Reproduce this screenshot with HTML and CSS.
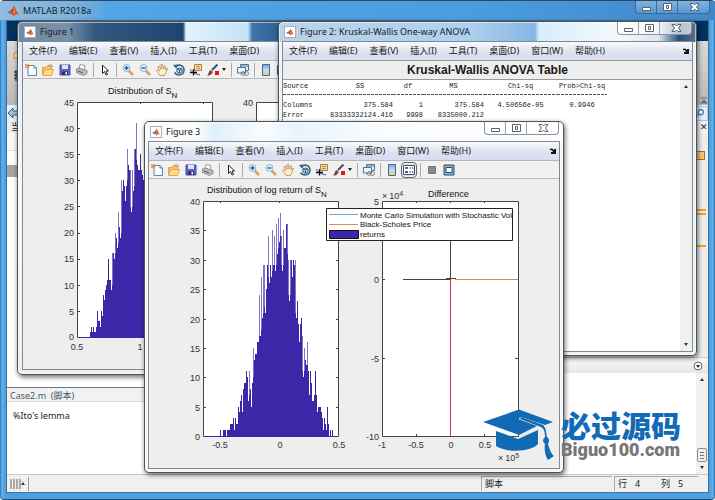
FILE: index.html
```html
<!DOCTYPE html>
<html lang="zh-CN">
<head>
<meta charset="utf-8">
<title>MATLAB R2018a</title>
<link rel="stylesheet" href="styles.css">
</head>
<body>
<svg class="sprites" aria-hidden="true">
  <symbol id="logo" viewBox="0 0 12 12"><path d="M0 7L3.500 5.500L5.500 8L3 9Z" fill="#4a87b8"/><path d="M3.500 5.500L5.500 4L7 1L7.500 4L5.500 8Z" fill="#7c3532"/><path d="M7 1C8.500 3 9.500 7 12 10C9.500 8.500 8 9 6.500 11.500C6 9.500 5 9 3 9C5.500 7.500 6 3 7 1Z" fill="#d9531e"/><path d="M7 2L8 7L6.500 10Z" fill="#f5a04a"/></symbol>
  <symbol id="new" viewBox="0 0 12 12"><path d="M3 1.500H9L11.500 4V11.500H3Z" fill="#f5fbff" stroke="#6387a9"/><path d="M9 1.500V4H11.500" fill="none" stroke="#6387a9"/><path d="M0 0L4 4M4 0L0 4M2 0V4.500M0 2H4.500" stroke="#e08a4c"/></symbol>
  <symbol id="open" viewBox="0 0 12 12"><path d="M.5 11V3.500H4L5 2H9.500V5" fill="#f7c467" stroke="#dfa04a"/><path d="M.5 11.500L2.500 5.500H11.500L9.500 11.500Z" fill="#ffdb86" stroke="#e2a552"/><path d="M6 1.500C9 0 10 1 11 3" fill="none" stroke="#8793a0"/></symbol>
  <symbol id="save" viewBox="0 0 12 12"><path d="M1 1H11V11H1Z" fill="#5f62c4" stroke="#4b4fa4"/><path d="M3 1H9V5H3Z" fill="#dde8fb"/><path d="M3 7.500H9V11H3Z" fill="#30305d"/><path d="M6.500 8H8V10.500H6.500Z" fill="#fff"/></symbol>
  <symbol id="print" viewBox="0 0 12 12"><path d="M3 5L4 .500L9 1.500L8.500 5" fill="#fff" stroke="#999"/><path d="M.500 5L3 4L11 6.500V9.500L7.500 11.500L.500 8.500Z" fill="#b8bbbd" stroke="#8b8e90"/><path d="M2 7L7 9" stroke="#555"/><path d="M8 9.500L10 8.500" stroke="#e0c34d"/></symbol>
  <symbol id="pointer" viewBox="0 0 12 12"><path d="M3.500 1V9.500L5.500 7.500L7 11L8.500 10.500L7 7H9.500Z" fill="#fff" stroke="#222"/></symbol>
  <symbol id="zoomin" viewBox="0 0 12 12"><path d="M6.500 6.500L11 11" stroke="#d9a25c" stroke-width="2.500"/><circle cx="4.500" cy="4" r="3.500" fill="#d9efff" stroke="#8db8dc"/><path d="M2.500 4H6.500M4.500 2V6" stroke="#245a96" stroke-width="1.300"/></symbol>
  <symbol id="zoomout" viewBox="0 0 12 12"><path d="M6.500 6.500L11 11" stroke="#d9a25c" stroke-width="2.500"/><circle cx="4.500" cy="4" r="3.500" fill="#d9efff" stroke="#8db8dc"/><path d="M2.500 4H6.500" stroke="#245a96" stroke-width="1.300"/></symbol>
  <symbol id="hand" viewBox="0 0 12 12"><path d="M4 11.500L.500 6.500L1.500 5.500L3.500 7L2 2.500L3.500 2L5 5.500L5 .500H6.500L7 5L8.500 1.500L9.500 2L9 6L11 4L11.500 5L9.500 9L8.500 11.500Z" fill="#fff0cf" stroke="#c39d71"/></symbol>
  <symbol id="rotate" viewBox="0 0 12 12"><path d="M3 2.500C6-.500 11.500 2 11 6.500C10.500 11.500 4 12.500 1.500 8.500" fill="none" stroke="#355d7f" stroke-width="1.500"/><path d="M0 1L4.500.500L3.500 5Z" fill="#355d7f"/><path d="M4 5L6.500 4L9 5V8L6.500 9.500L4 8Z" fill="#c9dcea" stroke="#355d7f"/><path d="M4 5L6.500 6L9 5M6.500 6V9" fill="none" stroke="#355d7f"/></symbol>
  <symbol id="cursor" viewBox="0 0 12 12"><path d="M4.500.500H11.500V6.500H4.500Z" fill="#f6dc9b" stroke="#a98349"/><path d="M6 2.500H10M6 4.500H10" stroke="#b89358"/><path d="M0 5C2 9 6 10 10 11" fill="none" stroke="#3d4bb0"/><path d="M3.500 5V11.500M0 8.500H7" stroke="#111" stroke-width="1.300"/></symbol>
  <symbol id="brush" viewBox="0 0 12 12"><path d="M5 6L10.500.500" stroke="#3b4d79" stroke-width="2"/><path d="M0 11.500C2 10.500 1 8 3.500 6L6 8C4 11 3 11.500 0 11.500Z" fill="#863f3d"/><path d="M8 7H12V11H8Z" fill="#f50f0f"/></symbol>
  <symbol id="link" viewBox="0 0 12 12"><path d="M3.500.500H11.500V6.500H3.500Z" fill="#eaf4fb" stroke="#49769c"/><path d="M3 2H12" stroke="#49769c"/><path d="M.500 3.500H8.500V9H.500Z" fill="#eff6fb" stroke="#49769c"/><path d="M4 9.500C4 7 8 7 8 9.500S4 12 4 9.500M7 9.500C7 7 11.500 7 11.500 9.500S7 12 7 9.500" fill="none" stroke="#6a747c"/></symbol>
  <linearGradient id="spectrum" x2="0" y2="1"><stop stop-color="#7a9be2"/><stop offset=".5" stop-color="#c2dcef"/><stop offset="1" stop-color="#ffc27a"/></linearGradient>
  <symbol id="colorbar" viewBox="0 0 12 12"><path d="M2.500.500H9.500V11.500H2.500Z" fill="url(#spectrum)" stroke="#456a91"/></symbol>
  <symbol id="legend" viewBox="0 0 12 12"><path d="M.500 1.500H11.500V10.500H.500Z" fill="#fff" stroke="#39527d"/><path d="M2 3H5V5H2Z" fill="#c54444"/><path d="M2 7H5V9H2Z" fill="#4453bb"/><path d="M6.500 4H8M9 4H10.500M6.500 8H8M9 8H10.500" stroke="#333"/></symbol>
  <symbol id="hide" viewBox="0 0 12 12"><path d="M2.500 2.500H9.500V9.500H2.500Z" fill="#8c8c8c" stroke="#767676"/></symbol>
  <symbol id="dock" viewBox="0 0 12 12"><path d="M1 1H11V11H1Z" fill="#8fb0c6" stroke="#284e70"/><path d="M3 3.500H9V8.500H3Z" fill="#f7fcff" stroke="#284e70"/></symbol>
  <symbol id="min" viewBox="0 0 12 12"><path d="M2.500 6.500H10.500V9.500H2.500Z" fill="#fff" stroke="#59626d"/></symbol>
  <symbol id="max" viewBox="0 0 12 12"><path d="M2.500 2.500H10.500V9.500H2.500Z" fill="#fff" stroke="#59626d"/><path d="M5.500 4.500H7.500V7.500H5.500Z" fill="#fff" stroke="#59626d"/></symbol>
  <symbol id="close" viewBox="0 0 12 12"><path d="M2 2.500H5L6.500 4L8 2.500H11L8.500 6L11 9.500H8L6.500 8L5 9.500H2L4.500 6Z" fill="#fff" stroke="#59626d"/></symbol>
  <symbol id="undock" viewBox="0 0 6 6"><path d="M0 1C2 0 3 1 4 2.500V1H6V6H1V4H3C2 2 1 2 0 2Z" fill="#111"/></symbol>
</svg>

<main class="app">
  <header class="titlebar app-title">
    <svg class="logo"><use href="#logo"/></svg><h1>MATLAB R2018a</h1>
    <div class="winbtns"><button aria-label="最小化"><svg><use href="#min"/></svg></button><button aria-label="最大化"><svg><use href="#max"/></svg></button><button class="wide" aria-label="关闭"><svg><use href="#close"/></svg></button></div>
  </header>
  <div class="app-body">
    <div class="tabs-strip"></div>
    <div class="ribbon">
      <svg class="ribbon-icon" viewBox="0 0 6 30"><path d="M1 2H6V7H1Z" fill="#ffe1a0" stroke="#d48d2c"/><path d="M1 21H6M3 19V30M1 24H6M1 28L5 25" stroke="#222" fill="none"/></svg>
      <svg class="collapse" viewBox="0 0 8 8"><path d="M1 1H7M1 6L4 3L7 6Z" stroke="#666" fill="#777"/></svg>
    </div>
    <div class="address">
      <svg class="back" viewBox="0 0 12 12"><path d="M1 6L6 1V4H12V8H6V11Z" fill="#9ac2df" stroke="#315f89"/></svg>
      <button class="search" aria-label="搜索"><svg viewBox="0 0 12 12"><path d="M5 7L1 11" stroke="#79a7ce" stroke-width="2"/><circle cx="7" cy="5" r="3" fill="#fff" stroke="#317ac0" stroke-width="1.500"/></svg></button>
    </div>
    <div class="panes">
      <section class="left-pane">
        <div class="pane-tab">当</div>
        <div class="list"><div class="list-head"></div><div class="list-row"></div></div>
        <h2>Case2.m&nbsp; (脚本)</h2>
        <p class="preview">%Ito's lemma</p>
      </section>
      <section class="right-pane">
        <div class="editor-head"><button aria-label="关闭标签">✕</button></div>
        <div class="editor"><div class="marks"><i class="box"></i><i class="m1"></i><i class="m2"></i><i class="m3"></i></div></div>
        <div class="cmd-head"><svg viewBox="0 0 10 10"><circle cx="5" cy="5" r="4" fill="#fff" stroke="#666"/><path d="M3 4H7L5 7Z" fill="#333"/></svg></div>
        <div class="cmd"><div class="scroll"><i class="up"></i><i class="thumb"></i><i class="down"></i></div></div>
      </section>
    </div>
    <footer class="status">
      <div class="grip"><i class="up"></i></div><span class="spacer"></span>
      <span class="cell kind">脚本</span><span class="cell pos"><b>行</b><b>4</b><b>列</b><b>5</b></span>
    </footer>
  </div>
</main>

<section class="figure fig1" aria-label="Figure 1">
  <header class="titlebar"><svg class="logo chip"><use href="#logo"/></svg><h2>Figure 1</h2></header>
  <div class="client">
    <nav class="menu"><button>文件(F)</button><button>编辑(E)</button><button>查看(V)</button><button>插入(I)</button><button>工具(T)</button><button>桌面(D)</button></nav>
    <div class="toolbar"></div>
    <svg class="plot" viewBox="23 79 410 290">
      <path class="axes" d="M77.500 102.500H212.500V337.500H77.500Z"/>
      <path class="axes" d="M256.500 102.500H392.500V337.500H256.500Z"/>
      <g class="bars" id="hist1"></g>
      <path class="base" d="M78 337.500H212"/>
      <path class="ticks" id="ticks1" d="M140.500 102V104M203.500 102V104"/>
      <text class="title" x="108" y="94">Distribution of S<tspan class="sub" dy="4">N</tspan></text>
      <g class="lab end"><text x="74" y="106">45</text><text x="74" y="132">40</text><text x="74" y="158">35</text><text x="74" y="184">30</text><text x="74" y="210">25</text><text x="74" y="236">20</text><text x="74" y="262">15</text><text x="74" y="289">10</text><text x="74" y="315">5</text><text x="74" y="340">0</text><text x="253" y="106">40</text></g>
      <g class="lab mid"><text x="77" y="350">0.5</text><text x="140" y="350">1</text></g>
    </svg>
  </div>
</section>

<section class="figure fig2" aria-label="Figure 2">
  <header class="titlebar"><svg class="logo chip"><use href="#logo"/></svg><h2>Figure 2: Kruskal-Wallis One-way ANOVA</h2>
    <div class="winbtns"><button aria-label="最小化"><svg><use href="#min"/></svg></button><button aria-label="最大化"><svg><use href="#max"/></svg></button><button class="wide" aria-label="关闭"><svg><use href="#close"/></svg></button></div></header>
  <div class="client">
    <nav class="menu"><button>文件(F)</button><button>编辑(E)</button><button>查看(V)</button><button>插入(I)</button><button>工具(T)</button><button>桌面(D)</button><button>窗口(W)</button><button>帮助(H)</button><svg class="undock"><use href="#undock"/></svg></nav>
    <h3>Kruskal-Wallis ANOVA Table</h3>
    <div class="sheet">
      <table>
        <colgroup><col class="c1"><col class="c2"><col class="c3"><col class="c4"><col class="c5"><col class="c6"></colgroup>
        <thead><tr><th>Source</th><th>SS</th><th>df</th><th>MS</th><th>Chi-sq</th><th>Prob&gt;Chi-sq</th></tr></thead>
        <tbody><tr><th>Columns</th><td>375.584</td><td>1</td><td>375.584</td><td>4.50656e-05</td><td>0.9946</td></tr>
        <tr><th>Error</th><td>83333332124.416</td><td>9998</td><td>8335000.212</td><td></td><td></td></tr></tbody>
      </table>
      <div class="scroll"><i class="up"></i><i class="down"></i></div>
    </div>
  </div>
</section>

<section class="figure fig3" aria-label="Figure 3">
  <header class="titlebar"><svg class="logo chip"><use href="#logo"/></svg><h2>Figure 3</h2>
    <div class="winbtns"><button aria-label="最小化"><svg><use href="#min"/></svg></button><button aria-label="最大化"><svg><use href="#max"/></svg></button><button class="wide" aria-label="关闭"><svg><use href="#close"/></svg></button></div></header>
  <div class="client">
    <nav class="menu"><button>文件(F)</button><button>编辑(E)</button><button>查看(V)</button><button>插入(I)</button><button>工具(T)</button><button>桌面(D)</button><button>窗口(W)</button><button>帮助(H)</button><svg class="undock"><use href="#undock"/></svg></nav>
    <div class="toolbar"></div>
    <svg class="plot" viewBox="149 179 410 289">
      <path class="axes" d="M203.500 201.500H338.500V436.500H203.500Z"/>
      <path class="axes" d="M382.500 201.500H518.500V436.500H382.500Z"/>
      <g class="bars" id="hist3"></g>
      <path class="base" d="M204 436.500H333"/>
      <path class="ticks" id="ticks3" d="M220.500 201V203M279.500 201V203"/>
      <path class="ticks" d="M416.500 201V203M450.500 201V203M484.500 201V203M416.500 436V434M484.500 436V434M382 279.500H385M382 358.500H385M518 358.500H515"/>
      <path class="line dark" d="M403 279.500H451M450.500 240V279M446 278.500H456"/>
      <path class="line orange" d="M455 279.500H518"/>
      <path class="line red" d="M450.500 280V436"/>
      <text class="title" x="207" y="193">Distribution of log return of S<tspan class="sub" dy="4">N</tspan></text>
      <text class="title" x="428" y="197">Difference</text>
      <g class="lab end"><text x="200" y="205">40</text><text x="200" y="234">35</text><text x="200" y="264">30</text><text x="200" y="293">25</text><text x="200" y="323">20</text><text x="200" y="352">15</text><text x="200" y="381">10</text><text x="200" y="411">5</text><text x="200" y="440">0</text>
      <text x="379" y="205">5</text><text x="379" y="283">0</text><text x="379" y="362">-5</text><text x="379" y="440">-10</text></g>
      <g class="lab mid"><text x="220" y="448">-0.5</text><text x="280" y="448">0</text><text x="339" y="448">0.5</text><text x="382" y="448">-1</text><text x="416" y="448">-0.5</text><text x="451" y="448">0</text><text x="485" y="448">0.5</text></g>
      <text class="lab" x="382" y="199">×<tspan dx="2">10</tspan><tspan class="sup" dy="-3">4</tspan></text>
      <text class="lab" x="498" y="461">×<tspan dx="2">10</tspan><tspan class="sup" dy="-3">5</tspan></text>
      <path d="M326.500 208.500H512.500V240.500H326.500Z" fill="#fff" stroke="#222"/>
      <path class="line" d="M329 214.500H358" stroke="#63a9da"/><path class="line" d="M329 224.500H358" stroke="#e08a5f"/>
      <path d="M329.500 230.500H358.500V238.500H329.500Z" fill="#3e26a8" stroke="#111"/>
      <g class="key"><text x="360" y="218">Monte Carlo Simulation with Stochastic Vol</text><text x="360" y="227">Black-Scholes Price</text><text x="360" y="237">returns</text></g>
    </svg>
  </div>
</section>

<aside class="watermark">
  <svg viewBox="482 410 74 52" aria-hidden="true"><g fill="#116ab5"><path d="M483 423L519 410.500L553 423L545 426L521 418L518 420L537 427L519 436Z"/><path d="M496 432L518 440L538 431V445C531 453 506 454 496 447Z"/><path d="M521 418L543 426C547 430 546 435 547 438C550 440 549 443 548 445C550 452 552 456 554 457L548 461C545 457 544 449 545 445C542 442 543 440 545 438C545 432 544 430 541 428L520 420Z"/></g></svg>
  <div><strong>必过源码</strong><span>Biguo100.com</span></div>
</aside>
<script src="figures.js"></script>
</body>
</html>
```
FILE: styles.css
```css
* { box-sizing: border-box; }
body { margin: 0; height: 100vh; overflow: hidden; position: relative; font: 9px/12px "Noto Sans", "Noto Sans CJK SC", sans-serif; color: #1a1a1a; }
h1, h2, h3, p { margin: 0; font-weight: 400; }
button { border: 0; background: none; padding: 0; font: inherit; color: inherit; }
svg { display: block; flex: none; }
i { display: block; }
.sprites { position: absolute; width: 0; height: 0; }

.app { height: 100%; display: flex; flex-direction: column; padding: 0 6px 6px; background: linear-gradient(90deg, #2874b5 0, #62b5ee 2px, #4e9fdf 5px, #4e9fdf calc(100% - 5px), #62b5ee calc(100% - 2px), #23669f 100%); border-radius: 4px; border: solid #284a68; border-width: 1px 0; }
.titlebar { display: flex; align-items: center; }
.app-title { height: 19px; gap: 4px; margin: 0 -6px; padding: 0 5px 0 7px; background: linear-gradient(90deg, #93bbdc, #7fb1dd 70px, #55a4e4 110px, #4b9ddf 65%, #4187c8); }
.titlebar h1, .titlebar h2 { font-size: 9px; line-height: 12px; }
.logo { width: 12px; height: 12px; }
.chip { background: #fff; border: 1px solid #a5b0ba; padding: 1px; }
.winbtns { display: flex; align-self: flex-start; margin-left: auto; height: 13px; border: 1px solid #89949e; border-top: 0; border-radius: 0 0 4px 4px; overflow: hidden; }
.winbtns button { width: 21px; display: grid; place-items: center; border-right: 1px solid #9aa5af; }
.winbtns .wide { width: 31px; border: 0; }
.winbtns svg { width: 12px; height: 12px; }
.app-title .winbtns { border-color: #396a99; background: linear-gradient(#82b3dd, #5799d1); }
.app-title .winbtns button { border-color: #396a99; }

.app-body { flex: 1; min-height: 0; display: flex; flex-direction: column; background: #fff; border: 1px solid #466e90; }
.tabs-strip { height: 20px; background: #003260; }
.ribbon { height: 64px; display: flex; justify-content: space-between; align-items: flex-end; background: linear-gradient(#d9d9d9, #b9b9b9); }
.ribbon-icon { width: 6px; height: 30px; margin: 0 0 24px 6px; }
.collapse { width: 8px; height: 8px; }
.address { height: 16px; display: flex; align-items: center; justify-content: space-between; background: #eef1f4; }
.back { width: 12px; height: 12px; }
.search { width: 14px; height: 15px; border: 1px solid #b8c7dc; background: #e8effa; }
.search svg { width: 10px; height: 10px; }
.panes { flex: 1; min-height: 0; display: grid; grid-template-columns: 1fr 1fr; }
.left-pane, .right-pane { display: flex; flex-direction: column; min-height: 0; }
.pane-tab { height: 12px; padding-left: 4px; background: #ececec; line-height: 12px; }
.list { flex: 1; border-bottom: 1px solid #777; }
.list-head { height: 18px; background: #f8f8f8; border-bottom: 1px solid #ddd; }
.list-row { height: 12px; margin-top: 14px; background: #a5a5a5; }
.left-pane h2 { height: 14px; padding-left: 3px; font-size: 9px; line-height: 16px; color: #42576a; background: #f2f2f2; border-bottom: 1px solid #ddd; }
.preview { height: 72px; padding: 8px 6px; }
.editor-head { height: 13px; text-align: right; background: #f1f1f1; line-height: 12px; }
.editor { flex: 1; display: flex; justify-content: flex-end; }
.marks { width: 12px; padding: 17px 2px 0 0; background: #eee; }
.marks i { height: 2px; background: #f6a02b; }
.marks .box { width: 9px; height: 9px; background: #fcc16c; border: 1px solid #8e7450; }
.marks .m1 { margin-top: 49px; }
.marks .m2 { margin-top: 2px; }
.marks .m3 { margin-top: 30px; }
.cmd-head { height: 16px; display: flex; justify-content: flex-end; align-items: center; padding-right: 5px; background: linear-gradient(#fafafa, #e6e6e6); border-top: 1px solid #ccc; }
.cmd-head svg { width: 10px; height: 10px; }
.cmd { height: 101px; display: flex; justify-content: flex-end; }
.scroll { width: 12px; display: flex; flex-direction: column; align-items: center; padding: 5px 0; background: #f0f0f0; }
.up, .down { width: 0; height: 0; border: solid transparent; border-width: 0 2px 3px; border-bottom-color: #333; }
.down { border-width: 3px 2px 0; border-top-color: #333; margin-top: auto; }
.thumb { width: 10px; height: 14px; margin: auto 0 4px; border: 1px solid #8e8e8e; border-radius: 2px; background: repeating-linear-gradient(#777 0 1px, #eee 1px 3px) center / 4px 7px no-repeat, #eee; }
.thumb + .down { margin-top: 0; }
.status { height: 18px; display: flex; align-items: center; background: #f0f0f0; border-top: 1px solid #c8c8c8; padding-right: 10px; gap: 2px; }
.grip { height: 14px; width: 22px; display: flex; align-items: center; justify-content: flex-end; padding-right: 3px; border-right: 1px solid #999; background: repeating-linear-gradient(90deg, #aaa 0 2px, #eee 2px 3px) 3px center / 11px 10px no-repeat; }
.spacer { flex: 1; }
.cell { height: 15px; line-height: 14px; padding-left: 3px; border: solid #aaa; border-width: 1px 0 0 1px; }
.kind { width: 131px; }
.pos { width: 84px; display: flex; }
.cell b { font-weight: 400; }
.pos b:nth-child(odd) { width: 17px; }
.pos b:nth-child(2) { width: 26px; }

.figure { position: absolute; padding: 0 3px 3px; border: 1px solid #4b5359; border-radius: 5px; box-shadow: 0 0 0 1px #fff8 inset, 1px 2px 5px #0009; }
.figure .titlebar { height: 19px; padding-left: 2px; }
.figure .titlebar h2 { margin-left: 4px; }
.figure .winbtns { margin-right: 1px; background: #fffa; }
.client { background: #eee; border: 1px solid #818a91; }
.fig1 { left: 17px; top: 21px; width: 422px; padding: 0 4px 4px; background: linear-gradient(90deg, #718aa5 0, #7890aa 50px, #31587f 78px, #1d456e 165px, #dff1fc 168px, #c7e2f7 230px, #3f76a9 234px, #2d6296 260px) top / 100% 20px no-repeat, linear-gradient(#dce9f5, #fafafa 50%, #eee); }
.fig2 { left: 278px; top: 21px; width: 419px; background: linear-gradient(90deg, #bad3e9 0, #aed0ef 190px, #86b6e3 256px, #d8edfa 260px, #f4f9fc 340px, #dce5ed 380px, #244d76 400px, #56728e 100%) top / 100% 20px no-repeat, #edf4fa; }
.fig3 { left: 144px; top: 121px; width: 420px; background: linear-gradient(90deg, #fafafa, #fafcfd 50px, #dff0fb 70px, #f9fcfe 120px, #e7f4fd 150px, #fafdff 240px, #fff) top / 100% 20px no-repeat, #f4f7f9; }
.menu { height: 18px; display: flex; align-items: center; gap: 12px; padding-left: 6px; background: linear-gradient(#f8fafd, #dce1f0 60%, #d8def0); font-size: 9px; }
.undock { width: 6px; height: 6px; margin: 0 3px 0 auto; }
.toolbar { height: 19px; display: flex; align-items: center; gap: 5px; padding-left: 2px; background: #f1f1f1; border: solid #b7b7b7; border-width: 1px 0; }
.toolbar button, .toolbar svg { width: 12px; height: 12px; }
.toolbar .sep { width: 1px; height: 14px; background: #aaa; }
.toolbar .drop { width: 0; height: 0; margin-left: -2px; border: solid transparent; border-width: 3px 2px 0; border-top-color: #222; }
.toolbar .on { outline: 1px solid #666; outline-offset: 1px; border-radius: 2px; background: #ddd; }
.plot { width: 100%; height: auto; font-family: "Liberation Sans", Arial, sans-serif; }
.axes { fill: #fff; stroke: #444; }
.ticks { fill: none; stroke: #444; }
.bars { fill: #3e26a8; shape-rendering: crispEdges; }
.bars .spike { fill: #8274c7; }
.base { stroke: #3e26a8; }
.line { fill: none; }
.dark { stroke: #444; }
.orange { stroke: #d88b3c; }
.red { stroke: #cf3055; }
.title { font-size: 9px; fill: #111; }
.sub { font-size: 8px; }
.sup { font-size: 7px; }
.lab { font-size: 9px; fill: #333; }
.end { text-anchor: end; }
.mid { text-anchor: middle; }
.key { font-size: 8px; fill: #111; }
.fig2 h3 { height: 20px; border: solid #999; border-width: 1px 0; font: bold 12px/18px "Liberation Sans", Arial, sans-serif; text-align: center; }
.sheet { height: 271px; display: flex; justify-content: space-between; background: #fff; }
.sheet table { align-self: flex-start; table-layout: fixed; width: 324px; border-collapse: collapse; font: 7px/10px "Liberation Mono", monospace; }
.sheet th, .sheet td { padding: 0; font-weight: 400; text-align: right; white-space: nowrap; }
.sheet thead th { height: 20px; padding-bottom: 9px; text-align: center; background: repeating-linear-gradient(90deg, #555 0 3px, #fff 3px 4px) 0 14px / 100% 1px no-repeat; }
.sheet th:first-child { text-align: left; }
.sheet td:nth-child(n+5) { text-align: center; }
.c1 { width: 44px; } .c2 { width: 66px; } .c3 { width: 30px; } .c4 { width: 61px; } .c5 { width: 73px; } .c6 { width: 50px; }

.watermark { position: absolute; left: 482px; top: 409px; display: flex; gap: 5px; }
.watermark > svg { width: 74px; height: 52px; }
.watermark strong, .watermark span { display: block; }
.watermark strong { font: 900 30px/30px "Noto Sans CJK SC", sans-serif; color: #116ab5; }
.watermark span { font: 900 18px/22px Roboto, sans-serif; color: #747678; }
```
FILE: figures.js
```js
const tools = ['new', 'open', 'save', 'print', '|', 'pointer', '|', 'zoomin', 'zoomout', 'hand', 'rotate', 'cursor', 'brush', 'v', '|', 'link', '|', 'colorbar', 'legend', '|', 'hide', 'dock'];
document.querySelectorAll('.toolbar').forEach(bar => {
  bar.innerHTML = tools.map(t => t === '|' ? '<i class="sep"></i>' : t === 'v' ? '<i class="drop"></i>'
    : `<button aria-label="${t}"${t === 'legend' && bar.closest('.fig3') ? ' class="on"' : ''}><svg><use href="#${t}"/></svg></button>`).join('');
});

const returns = [1,0,0,1,1,1,0,1,1,1,2,2,2,3,1,3,2,2,5,4,6,7,4,8,9,9,11,10,6,11,8,5,9,15,13,14,14,16,16,24,17,27,20,29,29,21,25,29,34,26,29,27,35,29,34,28,36,31,37,33,38,34,28,35,32,32,36,36,30,23,30,30,27,30,29,30,20,23,19,16,19,20,17,10,15,13,12,16,11,7,11,9,6,6,7,11,7,4,5,5,5,4,3,1,3,2,1,5,2,0,1,0,1];
const prices = [1,2,1,2,1,1,2,5,3,3,2,5,4,8,7,9,10,11,15,11,11,9,16,16,15,20,19,17,24,21,19,30,28,30,29,26,29,36,33,32,32,24,32,28,36,36,41,33,32,32,35,32,31,30,31,29];

function drawBars(id, data, x0, base, unit) {
  document.getElementById(id).innerHTML = data.map((v, i) => {
    const low = Math.min(v, data[i - 1] ?? 0, data[i + 1] ?? 0);
    const body = v > low + 4 ? low + 1 : v;
    const bar = (h, c) => `<rect class="${c}" x="${x0 + i}" y="${Math.round(base - h * unit)}" width="1" height="${Math.round(h * unit)}"/>`;
    return bar(v, 'spike') + bar(body, 'body');
  }).join('');
}
drawBars('hist3', returns, 220, 436, 5.88);
drawBars('hist1', prices, 90, 337, 5.22);

function addTicks(id, left, right, top, step, count) {
  let d = '';
  for (let i = 1; i < count; i++) {
    const y = Math.round(top + i * step) + .5;
    d += `M${left} ${y}H${left + 3}M${right} ${y}H${right - 3}`;
  }
  const path = document.getElementById(id);
  path.setAttribute('d', path.getAttribute('d') + d);
}
addTicks('ticks3', 203, 339, 201, 29.4, 8);
addTicks('ticks1', 77, 213, 102, 26.1, 9);
```
